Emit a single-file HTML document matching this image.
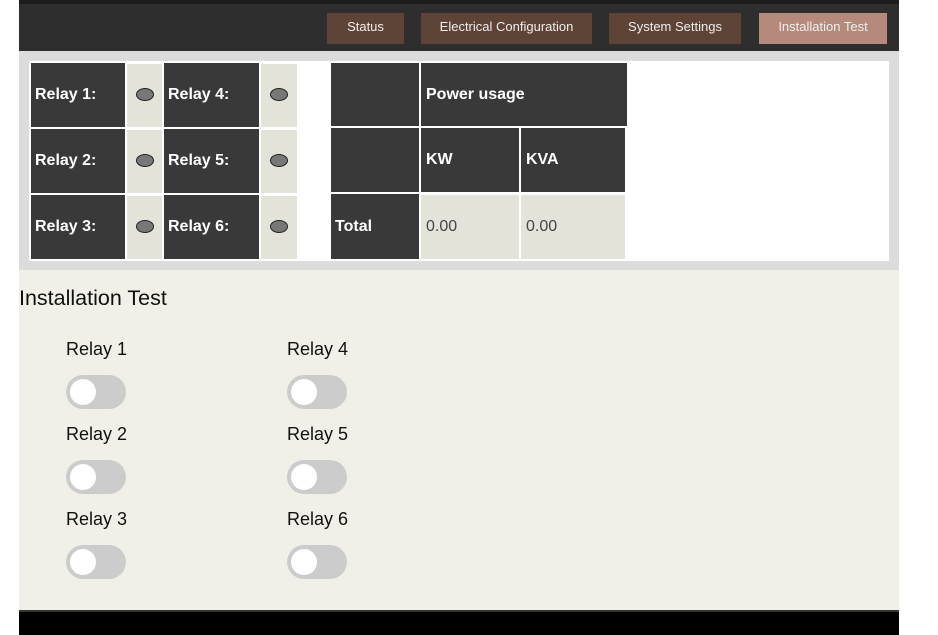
<!DOCTYPE html>
<html><head><meta charset="utf-8"><style>
*{margin:0;padding:0;box-sizing:border-box}
body{width:938px;height:635px;background:#fff;font-family:"Liberation Sans",sans-serif;position:relative;overflow:hidden}
.a{position:absolute}
.btn{position:absolute;top:13px;height:31px;background:#5e4337;color:#eee;font-size:13px;line-height:27px;text-align:center}
.d{position:absolute;background:#393939;color:#fff;font-weight:bold;font-size:16px;display:flex;align-items:center;padding-left:4px}
.l{position:absolute;background:#e4e3da;color:#444;font-size:16px;display:flex;align-items:center;padding-left:5px}
.led{position:absolute;width:18px;height:13px;border-radius:50%;background:#787878;border:1px solid #222}
.lab{position:absolute;font-size:18px;color:#111}
.tg{position:absolute;width:60px;height:34px;border-radius:17px;background:#ccc}
.tg:after{content:"";position:absolute;left:4px;top:4px;width:26px;height:26px;border-radius:50%;background:#fff}
</style></head><body>
<div class="a" style="left:19px;top:0;width:880px;height:4px;background:#1c1c1c"></div>
<div class="a" style="left:19px;top:4px;width:880px;height:47px;background:#2e2e2e"></div>
<div class="btn" style="left:327px;width:77px">Status</div>
<div class="btn" style="left:421px;width:171px">Electrical Configuration</div>
<div class="btn" style="left:609px;width:132px">System Settings</div>
<div class="btn" style="left:759px;width:128px;background:#b5897b">Installation Test</div>
<div class="a" style="left:19px;top:51px;width:880px;height:219px;background:#dcdcdc"></div>
<div class="a" style="left:29px;top:61px;width:860px;height:200px;background:#fff"></div>

<div class="d" style="left:31px;top:63px;width:94px;height:64px">Relay 1:</div>
<div class="l" style="left:127px;top:64px;width:35px;height:63px"></div>
<div class="d" style="left:164px;top:63px;width:95px;height:64px">Relay 4:</div>
<div class="l" style="left:261px;top:64px;width:36px;height:63px"></div>
<div class="d" style="left:31px;top:129px;width:94px;height:64px">Relay 2:</div>
<div class="l" style="left:127px;top:130px;width:35px;height:63px"></div>
<div class="d" style="left:164px;top:129px;width:95px;height:64px">Relay 5:</div>
<div class="l" style="left:261px;top:130px;width:36px;height:63px"></div>
<div class="d" style="left:31px;top:195px;width:94px;height:64px">Relay 3:</div>
<div class="l" style="left:127px;top:196px;width:35px;height:63px"></div>
<div class="d" style="left:164px;top:195px;width:95px;height:64px">Relay 6:</div>
<div class="l" style="left:261px;top:196px;width:36px;height:63px"></div>
<div class="led" style="left:136px;top:88px"></div><div class="led" style="left:270px;top:88px"></div>
<div class="led" style="left:136px;top:154px"></div><div class="led" style="left:270px;top:154px"></div>
<div class="led" style="left:136px;top:220px"></div><div class="led" style="left:270px;top:220px"></div>

<div class="d" style="left:331px;top:63px;width:88px;height:63px"></div>
<div class="d" style="left:421px;top:63px;width:206px;height:63px;padding-left:5px">Power usage</div>
<div class="d" style="left:331px;top:128px;width:88px;height:64px"></div>
<div class="d" style="left:421px;top:128px;width:98px;height:64px;padding-left:5px">KW</div>
<div class="d" style="left:521px;top:128px;width:104px;height:64px;padding-left:5px">KVA</div>
<div class="d" style="left:331px;top:194px;width:88px;height:65px">Total</div>
<div class="l" style="left:421px;top:195px;width:98px;height:64px">0.00</div>
<div class="l" style="left:521px;top:195px;width:104px;height:64px">0.00</div>

<div class="a" style="left:19px;top:270px;width:880px;height:340px;background:#f1f0e8"></div>
<div class="a" style="left:19px;top:286px;font-size:21.5px;color:#111">Installation Test</div>
<div class="lab" style="left:66px;top:339px">Relay 1</div><div class="tg" style="left:66px;top:375px"></div>
<div class="lab" style="left:287px;top:339px">Relay 4</div><div class="tg" style="left:287px;top:375px"></div>
<div class="lab" style="left:66px;top:424px">Relay 2</div><div class="tg" style="left:66px;top:460px"></div>
<div class="lab" style="left:287px;top:424px">Relay 5</div><div class="tg" style="left:287px;top:460px"></div>
<div class="lab" style="left:66px;top:509px">Relay 3</div><div class="tg" style="left:66px;top:545px"></div>
<div class="lab" style="left:287px;top:509px">Relay 6</div><div class="tg" style="left:287px;top:545px"></div>
<div class="a" style="left:19px;top:610px;width:880px;height:2px;background:#333"></div>
<div class="a" style="left:19px;top:612px;width:880px;height:23px;background:#000"></div>
</body></html>
